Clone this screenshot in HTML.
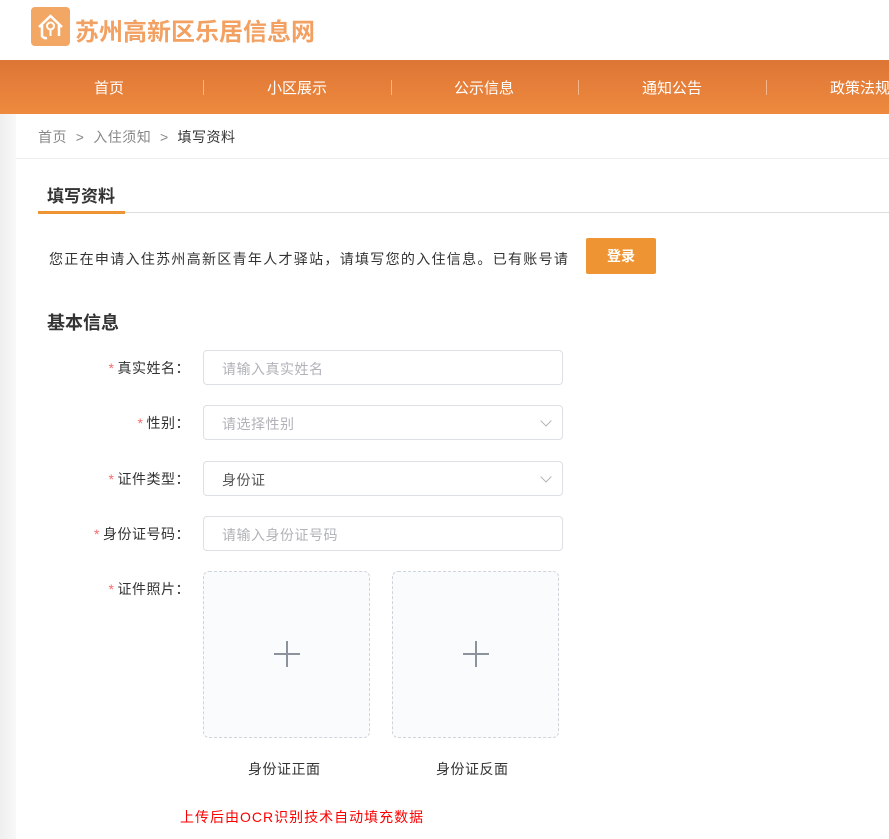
<!DOCTYPE html><html><head><meta charset="utf-8"><style>
*{margin:0;padding:0;box-sizing:border-box}
body{width:889px;height:839px;overflow:hidden;background:#fff;font-family:"Liberation Sans","Noto Sans CJK SC",sans-serif;color:#333;position:relative}
.abs{position:absolute;white-space:nowrap}
.nav{top:60px;left:0;width:889px;height:54px;background:linear-gradient(180deg,#dd7535,#ee8a3f)}
.nav span{position:absolute;top:17px;color:#fff;font-size:15px;white-space:nowrap}
.nav i{position:absolute;top:20px;width:1px;height:15px;background:#f3b58a}
.side{left:0;top:114px;width:16px;height:725px;background:linear-gradient(90deg,#efefef,#f8f8f8)}
.lbl{position:absolute;font-size:14px;color:#333;text-align:right;width:170px;left:20px;letter-spacing:0.5px}
.lbl b{color:#f56c6c;font-weight:normal;margin-right:3px}
.inp{position:absolute;left:203px;width:360px;height:35px;border:1px solid #dcdfe6;border-radius:4px;font-size:14px;color:#b0b3b8;padding:8px 18px;letter-spacing:0.5px}
.arr{position:absolute;right:12px;top:11px;width:8px;height:8px;border-right:1px solid #b0b3b8;border-bottom:1px solid #b0b3b8;transform:rotate(45deg)}
.up{position:absolute;top:571px;width:167px;height:167px;border:1px dashed #cfd3da;border-radius:6px;background:#fafbfd}
.up:before{content:"";position:absolute;left:70px;top:81px;width:26px;height:2px;background:#8c939d}
.up:after{content:"";position:absolute;left:82px;top:69px;width:2px;height:26px;background:#8c939d}
</style></head><body>
<div class="abs" style="left:31px;top:7px;width:39px;height:39px;background:#f3a765;border-radius:4px">
<svg width="39" height="39" viewBox="0 0 39 39"><path d="M8 20 L19.5 9 L31 20 M11 18 V29 A5 5 0 0 0 16 31 M28 18 V29" stroke="#fff" stroke-width="2.5" fill="none"/><circle cx="19.5" cy="19" r="3.5" stroke="#fff" stroke-width="2" fill="none"/><path d="M19.5 22.5V29" stroke="#fff" stroke-width="2"/></svg></div>
<div class="abs" style="left:75px;top:12px;font-size:24px;font-weight:bold;color:#f2a162">苏州高新区乐居信息网</div>
<div class="abs nav"><span style="left:94px">首页</span><i style="left:203px"></i><span style="left:267px">小区展示</span><i style="left:391px"></i><span style="left:454px">公示信息</span><i style="left:578px"></i><span style="left:642px">通知公告</span><i style="left:766px"></i><span style="left:830px">政策法规</span></div>
<div class="abs side"></div>
<div class="abs" style="left:38px;top:127px;font-size:14px;color:#888;letter-spacing:0.5px">首页 &nbsp;&gt;&nbsp; 入住须知 &nbsp;&gt;&nbsp; <span style="color:#333">填写资料</span></div>
<div class="abs" style="left:16px;top:158px;width:873px;height:1px;background:#eee"></div>
<div class="abs" style="left:47px;top:182px;font-size:17px;font-weight:bold;color:#333">填写资料</div>
<div class="abs" style="left:38px;top:212px;width:851px;height:1px;background:#ddd"></div>
<div class="abs" style="left:38px;top:211px;width:87px;height:3px;background:#ef9433"></div>
<div class="abs" style="left:49px;top:249px;font-size:14px;letter-spacing:1.3px">您正在申请入住苏州高新区青年人才驿站，请填写您的入住信息。已有账号请</div>
<div class="abs" style="left:586px;top:238px;width:70px;height:36px;background:#ef9433;color:#fff;font-size:14px;font-weight:bold;text-align:center;line-height:36px;border-radius:2px">登录</div>
<div class="abs" style="left:47px;top:309px;font-size:18px;font-weight:bold">基本信息</div>
<div class="lbl" style="top:358px"><b>*</b>真实姓名：</div><div class="inp" style="top:350px">请输入真实姓名</div>
<div class="lbl" style="top:413px"><b>*</b>性别：</div><div class="inp" style="top:405px">请选择性别<span class="arr"></span></div>
<div class="lbl" style="top:469px"><b>*</b>证件类型：</div><div class="inp" style="top:461px;color:#555">身份证<span class="arr"></span></div>
<div class="lbl" style="top:524px"><b>*</b>身份证号码：</div><div class="inp" style="top:516px">请输入身份证号码</div>
<div class="lbl" style="top:579px"><b>*</b>证件照片：</div>
<div class="up" style="left:203px"></div><div class="up" style="left:392px"></div>
<div class="abs" style="left:248px;top:759px;font-size:14px;letter-spacing:0.5px">身份证正面</div>
<div class="abs" style="left:436px;top:759px;font-size:14px;letter-spacing:0.5px">身份证反面</div>
<div class="abs" style="left:180px;top:807px;font-size:14px;color:#f00;letter-spacing:1px">上传后由OCR识别技术自动填充数据</div>
</body></html>
